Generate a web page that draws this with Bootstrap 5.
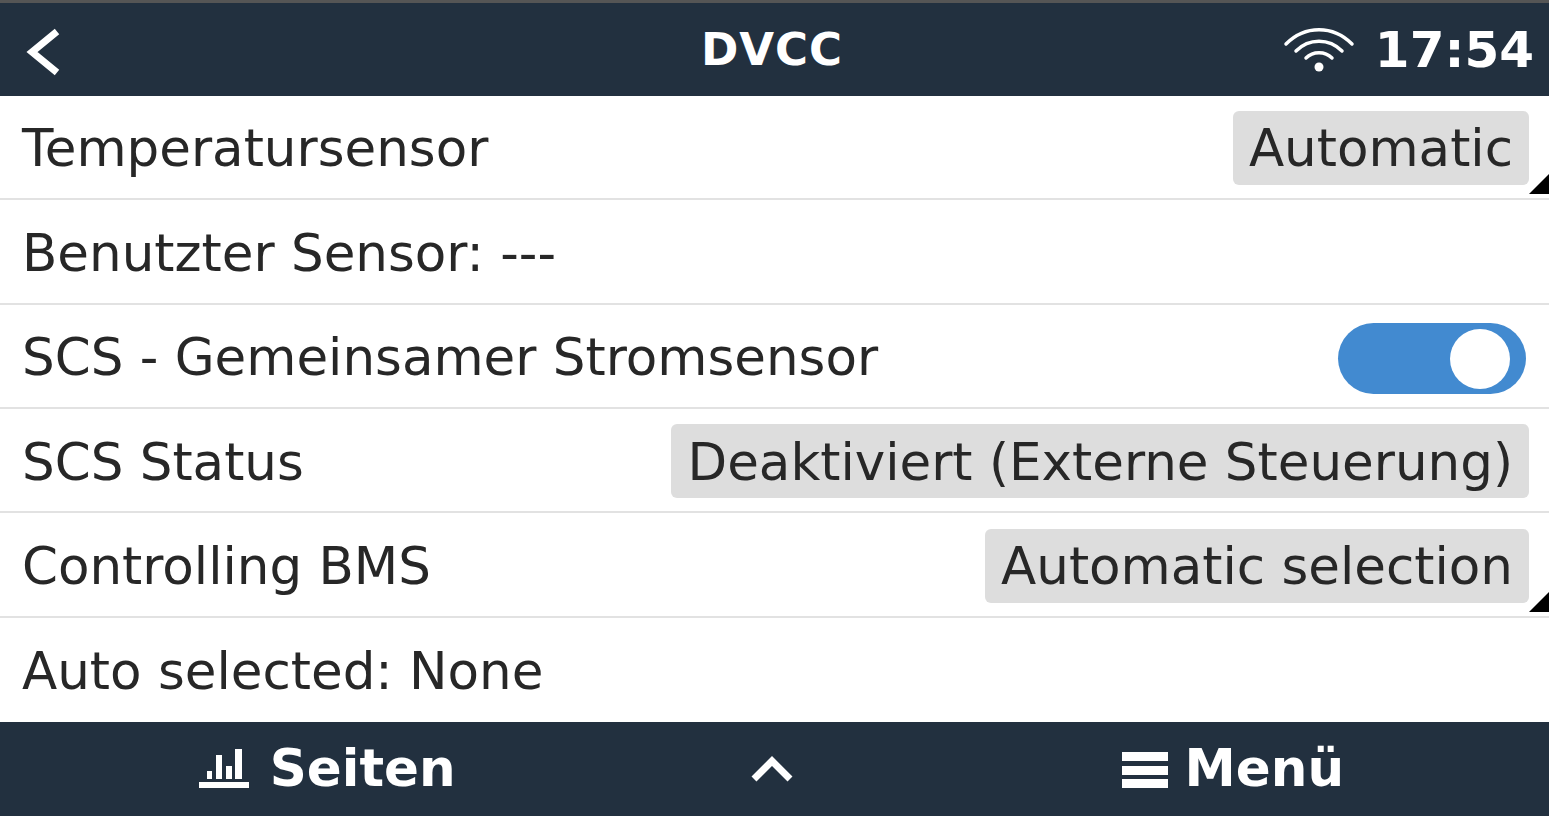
<!DOCTYPE html>
<html lang="de">
<head>
  <meta charset="UTF-8">
  <title>DVCC</title>
  <link href="https://cdn.jsdelivr.net/npm/bootstrap@5.3.0/dist/css/bootstrap.min.css" rel="stylesheet">
  <style>
    html, body {
      height: 816px;
      overflow: hidden;
    }
    body {
      background-color: #fff;
      font-family: "DejaVu Sans", sans-serif;
      color: #272727;
    }
    .gx-top {
      height: 96px;
      background-color: #22303f;
      border-top: 3px solid #555;
      color: #fff;
      padding: 2px 15px 0 26px;
    }
    .gx-title {
      left: 772px;
      margin-top: 1px;
      font-size: 45px;
      font-weight: 700;
      letter-spacing: 1px;
    }
    .gx-clock {
      font-size: 50px;
      font-weight: 700;
      line-height: 1;
    }
    .gx-wifi {
      margin-right: 20px;
    }
    .gx-row {
      height: 104.4px;
      padding: 2px 20px 0 22px;
      border-bottom: 2px solid #e2e2e2;
      font-size: 51.5px;
    }
    .gx-row:last-child {
      border-bottom: 0;
    }
    .gx-label {
      padding-top: 2px;
    }
    .gx-value {
      height: 74px;
      padding: 2px 16px 0;
      background-color: #dddddd;
      border-radius: 6px;
    }
    .gx-corner {
      right: 0;
      bottom: 4px;
      width: 0;
      height: 0;
      border-left: 20px solid transparent;
      border-bottom: 20px solid #000;
    }
    .gx-switch {
      width: 188px;
      height: 71px;
      margin: 4px 3px 0 0;
      padding: 0 16px;
      background-color: #428ad0;
      border-radius: 36px;
    }
    .gx-knob {
      width: 60px;
      height: 60px;
      background-color: #fff;
      border-radius: 50%;
    }
    .gx-bottom {
      height: 94px;
      background-color: #22303f;
      color: #fff;
      font-size: 51.5px;
      font-weight: 700;
    }
    .gx-tab-left {
      gap: 21px;
      padding-left: 138px;
    }
    .gx-tab-mid {
      padding-right: 4px;
    }
    .gx-tab-right {
      gap: 17px;
      padding-right: 116px;
    }
  </style>
</head>
<body>

  <div class="d-flex flex-column vh-100">
    <div class="gx-top d-flex align-items-center justify-content-between position-relative">
      <svg width="36" height="56" viewBox="0 0 36 56"><path d="M31 9.5 L6 30 L31 50.5" fill="none" stroke="#fff" stroke-width="7"/></svg>
      <div class="gx-title position-absolute top-50 translate-middle">DVCC</div>
      <div class="d-flex align-items-center">
        <svg class="gx-wifi" width="72" height="48" viewBox="0 0 72 48" fill="none" stroke="#fff" stroke-width="3.5" stroke-linecap="round">
          <path d="M3 18 C22 -1 50 -1 69 18"/>
          <path d="M13 25 C26 12 46 12 59 25"/>
          <path d="M23 32 C30 25 42 25 49 32"/>
          <circle cx="36" cy="41" r="4.5" fill="#fff" stroke="none"/>
        </svg>
        <div class="gx-clock">17:54</div>
      </div>
    </div>

    <div class="flex-grow-1">
      <div class="gx-row d-flex align-items-center justify-content-between position-relative">
        <span class="gx-label">Temperatursensor</span>
        <span class="gx-value d-flex align-items-center">Automatic</span>
        <span class="gx-corner position-absolute"></span>
      </div>
      <div class="gx-row d-flex align-items-center">
        <span class="gx-label">Benutzter Sensor: ---</span>
      </div>
      <div class="gx-row d-flex align-items-center justify-content-between">
        <span class="gx-label">SCS - Gemeinsamer Stromsensor</span>
        <span class="gx-switch d-flex align-items-center justify-content-end"><span class="gx-knob"></span></span>
      </div>
      <div class="gx-row d-flex align-items-center justify-content-between">
        <span class="gx-label">SCS Status</span>
        <span class="gx-value d-flex align-items-center">Deaktiviert (Externe Steuerung)</span>
      </div>
      <div class="gx-row d-flex align-items-center justify-content-between position-relative">
        <span class="gx-label">Controlling BMS</span>
        <span class="gx-value d-flex align-items-center">Automatic selection</span>
        <span class="gx-corner position-absolute"></span>
      </div>
      <div class="gx-row d-flex align-items-center">
        <span class="gx-label">Auto selected: None</span>
      </div>
    </div>

    <div class="gx-bottom row g-0 align-items-center text-center">
      <div class="col-4 d-flex align-items-center justify-content-center gx-tab-left">
        <svg width="50" height="42" viewBox="0 0 50 42" fill="#fff">
          <rect x="0" y="34" width="50" height="6"/>
          <rect x="8" y="23" width="5" height="8"/>
          <rect x="17" y="7" width="6" height="24"/>
          <rect x="27" y="18" width="6" height="13"/>
          <rect x="36" y="1" width="7" height="30"/>
        </svg>
        <span>Seiten</span>
      </div>
      <div class="col-4 d-flex align-items-center justify-content-center gx-tab-mid">
        <svg width="42" height="30" viewBox="0 0 42 30"><path d="M3 25 L21 7 L39 25" fill="none" stroke="#fff" stroke-width="7"/></svg>
      </div>
      <div class="col-4 d-flex align-items-center justify-content-center gx-tab-right">
        <svg width="46" height="38" viewBox="0 0 46 38" fill="#fff">
          <rect x="0" y="2" width="46" height="9"/>
          <rect x="0" y="16" width="46" height="9"/>
          <rect x="0" y="29" width="46" height="9"/>
        </svg>
        <span>Menü</span>
      </div>
    </div>
  </div>

</body>
</html>
